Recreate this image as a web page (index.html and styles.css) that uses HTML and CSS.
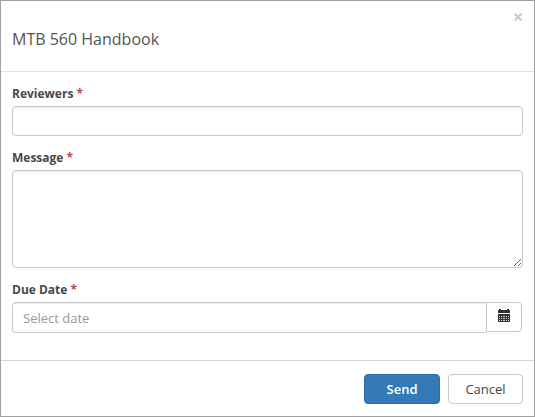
FILE: index.html
```html
<!DOCTYPE html>
<html lang="en">
<head>
<meta charset="utf-8">
<meta name="viewport" content="width=device-width, initial-scale=1">
<title>MTB 560 Handbook</title>
<link rel="stylesheet" href="styles.css">
</head>
<body>
<form class="dialog">
  <header class="dialog-header">
    <button type="button" class="close" aria-label="Close">
      <svg viewBox="0 0 8 8" width="8" height="8" aria-hidden="true"><path d="M.6.6l6.8 6.8M7.4.6L.6 7.4"/></svg>
    </button>
    <h1 class="dialog-title">MTB 560 Handbook</h1>
  </header>
  <div class="dialog-body">
    <div class="field">
      <label for="reviewers">Reviewers <span class="required">*</span></label>
      <input class="control" id="reviewers" type="text">
    </div>
    <div class="field">
      <label for="message">Message <span class="required">*</span></label>
      <textarea class="control message" id="message"></textarea>
    </div>
    <div class="field">
      <label for="due">Due Date <span class="required">*</span></label>
      <div class="date-group">
        <input class="control date" id="due" type="text" placeholder="Select date">
        <button type="button" class="calendar" aria-label="Open calendar">
          <svg viewBox="0 0 12 13" width="12" height="13" aria-hidden="true">
            <path fill="#333" d="M1 0h2v1h6V0h2v1h1v3H0V1h1zM0 5h12v8H0z"/>
            <path fill="#fff" fill-opacity=".8" d="M1 7h1v1H1zM3 7h1v1H3zM5 7h2v1H5zM8 7h1v1H8zM10 7h1v1h-1zM1 9h1v1H1zM3 9h1v1H3zM5 9h2v1H5zM8 9h1v1H8zM10 9h1v1h-1zM1 11h1v1H1zM3 11h1v1H3zM5 11h2v1H5zM8 11h1v1H8zM10 11h1v1h-1z"/>
          </svg>
        </button>
      </div>
    </div>
  </div>
  <footer class="dialog-footer">
    <button type="submit" class="btn btn-primary">Send</button>
    <button type="button" class="btn">Cancel</button>
  </footer>
</form>
</body>
</html>
```
FILE: styles.css
```css
*, *::before, *::after {
  box-sizing: border-box;
}

body {
  margin: 0;
  background: #fff;
  color: #484848;
  font-family: "Open Sans", "Noto Sans", sans-serif;
  font-size: 13px;
}

.dialog {
  display: flex;
  flex-direction: column;
  min-height: 100vh;
  border: 1px solid #a0a0a0;
}

.dialog-header {
  display: flex;
  flex-direction: column;
  padding: 8px 11px 20px;
  border-bottom: 1px solid #e2e2e2;
}

.close {
  display: flex;
  align-self: flex-end;
  align-items: center;
  justify-content: center;
  width: 10px;
  height: 16px;
  padding: 0;
  border: 0;
  background: none;
}

.close path {
  fill: none;
  stroke: #c8c8c8;
  stroke-width: 2;
}

.dialog-title {
  margin: 2px 0 0;
  color: #555;
  font-size: 16px;
  font-weight: 400;
  line-height: 24px;
}

.dialog-body {
  display: flex;
  flex: 1;
  flex-direction: column;
  gap: 13px;
  padding: 13px 11px 27px;
}

.field {
  display: flex;
  flex-direction: column;
  gap: 4px;
}

.field label {
  font-size: 12px;
  font-weight: 700;
  line-height: 17px;
}

.required {
  color: #b94a48;
}

.control {
  display: block;
  width: 100%;
  height: 30px;
  padding: 0 10px;
  border: 1px solid #c8c8c8;
  border-radius: 4px;
  background: #fff;
  box-shadow: inset 0 1px 1px rgba(0, 0, 0, 0.07);
  color: #555;
  font: inherit;
}

.message {
  height: 98px;
  padding: 6px 10px;
  resize: vertical;
}

.date-group {
  display: flex;
  align-items: flex-start;
  padding-right: 1px;
}

.date {
  flex: 1;
  min-width: 0;
  height: 31px;
  border-right: 0;
  border-radius: 4px 0 0 4px;
}

.date::placeholder {
  color: #999;
  opacity: 1;
}

.calendar {
  display: flex;
  align-items: center;
  justify-content: center;
  width: 36px;
  height: 30px;
  padding: 0 0 3px;
  border: 1px solid #c8c8c8;
  border-radius: 0 4px 4px 0;
  background: #fff;
}

.dialog-footer {
  display: flex;
  justify-content: flex-end;
  gap: 8px;
  padding: 13px 11px 12px;
  border-top: 1px solid #d4d4d4;
}

.btn {
  min-width: 75px;
  height: 30px;
  padding: 0 16px;
  border: 1px solid #c8c8c8;
  border-radius: 4px;
  background: #fff;
  color: #444;
  font: inherit;
}

.btn-primary {
  min-width: 76px;
  border-color: #2e6da4;
  background: #337ab7;
  color: #fff;
  font-weight: 600;
}
```
